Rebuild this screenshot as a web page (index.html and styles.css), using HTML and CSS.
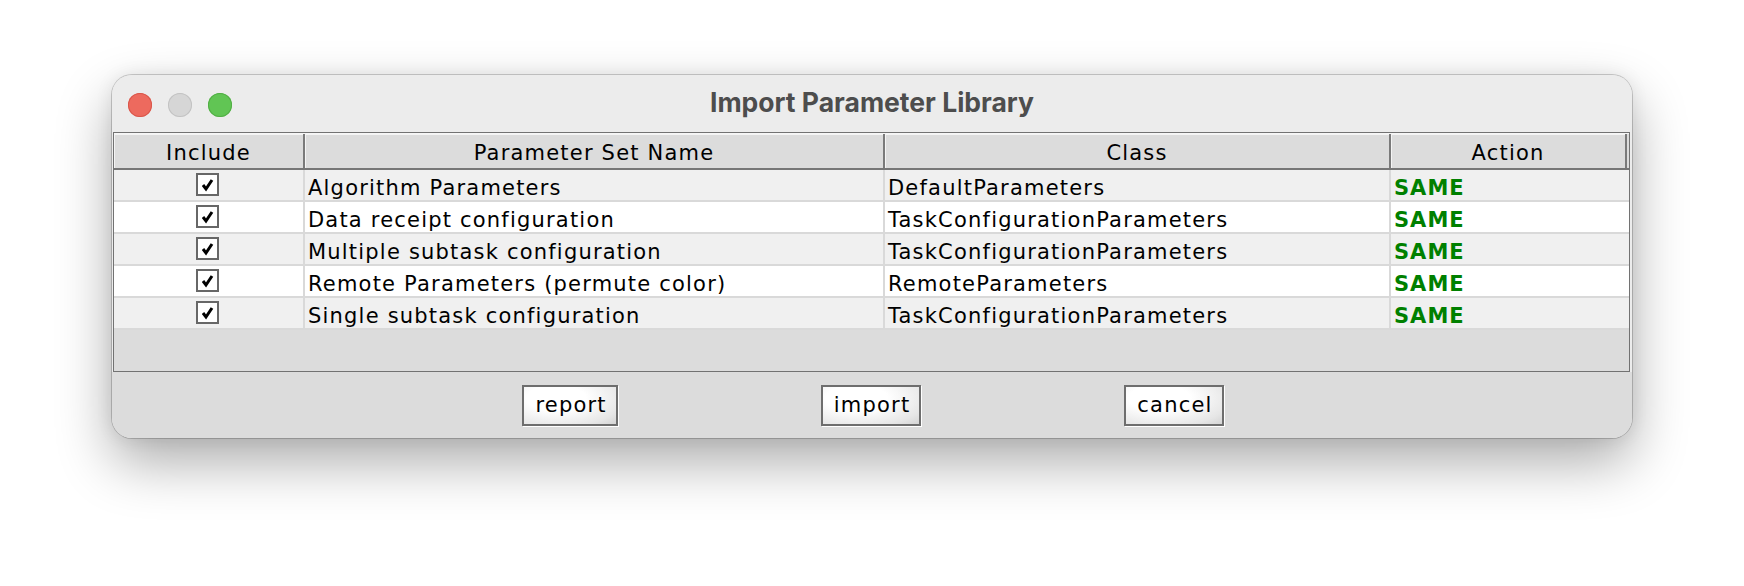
FILE: index.html
```html
<!DOCTYPE html>
<html>
<head>
<meta charset="utf-8">
<link rel="stylesheet" href="styles.css">
</head>
<body>
<div class="window">
  <div class="titlebar">
    <div class="lights">
      <span class="light red"></span>
      <span class="light gray"></span>
      <span class="light green"></span>
    </div>
    <div class="title">Import Parameter Library</div>
    <div></div>
  </div>
  <div class="scrollpane">
    <div class="thead">
      <div class="th">Include</div>
      <div class="th">Parameter Set Name</div>
      <div class="th">Class</div>
      <div class="th last">Action</div>
    </div>
    <div class="tbody">
      <div class="tr odd">
        <div class="td center"><svg class="cb" width="24" height="24" viewBox="0 0 24 24"><rect x="1" y="1" width="21" height="21" fill="#fff" stroke="#676767" stroke-width="2"/><path d="M7 12 L10 16 L16 7" fill="none" stroke="#000" stroke-width="3" stroke-linecap="butt" stroke-linejoin="miter"/></svg></div>
        <div class="td">Algorithm Parameters</div>
        <div class="td">DefaultParameters</div>
        <div class="td action">SAME</div>
      </div>
      <div class="tr">
        <div class="td center"><svg class="cb" width="24" height="24" viewBox="0 0 24 24"><rect x="1" y="1" width="21" height="21" fill="#fff" stroke="#676767" stroke-width="2"/><path d="M7 12 L10 16 L16 7" fill="none" stroke="#000" stroke-width="3" stroke-linecap="butt" stroke-linejoin="miter"/></svg></div>
        <div class="td">Data receipt configuration</div>
        <div class="td">TaskConfigurationParameters</div>
        <div class="td action">SAME</div>
      </div>
      <div class="tr odd">
        <div class="td center"><svg class="cb" width="24" height="24" viewBox="0 0 24 24"><rect x="1" y="1" width="21" height="21" fill="#fff" stroke="#676767" stroke-width="2"/><path d="M7 12 L10 16 L16 7" fill="none" stroke="#000" stroke-width="3" stroke-linecap="butt" stroke-linejoin="miter"/></svg></div>
        <div class="td">Multiple subtask configuration</div>
        <div class="td">TaskConfigurationParameters</div>
        <div class="td action">SAME</div>
      </div>
      <div class="tr">
        <div class="td center"><svg class="cb" width="24" height="24" viewBox="0 0 24 24"><rect x="1" y="1" width="21" height="21" fill="#fff" stroke="#676767" stroke-width="2"/><path d="M7 12 L10 16 L16 7" fill="none" stroke="#000" stroke-width="3" stroke-linecap="butt" stroke-linejoin="miter"/></svg></div>
        <div class="td">Remote Parameters (permute color)</div>
        <div class="td">RemoteParameters</div>
        <div class="td action">SAME</div>
      </div>
      <div class="tr odd">
        <div class="td center"><svg class="cb" width="24" height="24" viewBox="0 0 24 24"><rect x="1" y="1" width="21" height="21" fill="#fff" stroke="#676767" stroke-width="2"/><path d="M7 12 L10 16 L16 7" fill="none" stroke="#000" stroke-width="3" stroke-linecap="butt" stroke-linejoin="miter"/></svg></div>
        <div class="td">Single subtask configuration</div>
        <div class="td">TaskConfigurationParameters</div>
        <div class="td action">SAME</div>
      </div>
    </div>
  </div>
  <div class="buttons">
    <button class="btn">report</button>
    <button class="btn">import</button>
    <button class="btn">cancel</button>
  </div>
</div>
</body>
</html>
```

FILE: styles.css
```css
* { box-sizing: border-box; }
html, body { margin: 0; padding: 0; }
body {
  background: #ffffff;
  padding: 75px 0 0 112px;
  width: 1744px;
  height: 586px;
  overflow: hidden;
}
.window {
  width: 1520px;
  height: 363px;
  border-radius: 20px;
  overflow: hidden;
  background: #ececec;
  box-shadow: 0 0 0 1px rgba(0,0,0,0.18), 0 24px 55px rgba(0,0,0,0.33), 0 0 18px rgba(0,0,0,0.08);
  display: flex;
  flex-direction: column;
  font-family: "DejaVu Sans", sans-serif;
  font-size: 21px;
  color: #000;
}
.titlebar {
  height: 57px;
  flex: none;
  display: grid;
  grid-template-columns: 1fr auto 1fr;
  align-items: center;
  background: #ececec;
}
.lights {
  display: flex;
  gap: 16px;
  padding-left: 16px;
  padding-top: 2px;
}
.light {
  width: 24px;
  height: 24px;
  border-radius: 50%;
  display: block;
}
.light.red { background: #ed6a5e; box-shadow: inset 0 0 0 1px #d9574b; }
.light.gray { background: #d6d6d6; box-shadow: inset 0 0 0 1px #c3c3c3; }
.light.green { background: #61c554; box-shadow: inset 0 0 0 1px #52ae45; }
.title {
  font-family: Inter, "Liberation Sans", sans-serif;
  font-weight: 700;
  font-size: 26.5px;
  color: #4d4d4d;
  padding-bottom: 3px;
}
.scrollpane {
  margin: 0 2px 0 1px;
  height: 240px;
  flex: none;
  border: 1px solid #727272;
  background: #dcdcdc;
  box-shadow: 0 1px 0 #ffffff;
  letter-spacing: 1.2px;
}
.thead {
  display: grid;
  grid-template-columns: 191px 580px 506px 1fr;
  height: 37px;
  border-top: 1px solid #f6f6f6;
  border-bottom: 2px solid #767676;
  background: #dcdcdc;
}
.th {
  border-right: 2px solid #7a7a7a;
  box-shadow: inset 1px 0 0 #f4f4f4, inset 0 1px 0 #f4f4f4;
  text-align: center;
  line-height: 24px;
  padding-top: 7px;
}
.th.last { border-right: 2px solid #7a7a7a; margin-right: 2px; }
.tr {
  display: grid;
  grid-template-columns: 191px 580px 506px 1fr;
  height: 32px;
  background: #ffffff;
  border-bottom: 2px solid #d9d9d9;
}
.tr.odd { background: #f0f0f0; }
.td {
  border-right: 2px solid #d9d9d9;
  padding: 6px 0 0 3px;
  line-height: 24px;
  white-space: nowrap;
  overflow: hidden;
}
.td:last-child { border-right: none; }
.td.center {
  display: flex;
  justify-content: center;
  align-items: center;
  padding: 0 2px 0 0;
}
.cb { display: block; }
.td.action {
  color: #008000;
  font-weight: 700;
  padding-left: 3px;
  letter-spacing: 1px;
}
.buttons {
  flex: 1;
  background: #dcdcdc;
  display: flex;
  justify-content: center;
  align-items: flex-start;
  gap: 203px;
  padding-top: 13px;
  padding-left: 2px;
}
.btn {
  font-family: "DejaVu Sans", sans-serif;
  font-size: 21px;
  letter-spacing: 1.2px;
  color: #000;
  height: 41px;
  padding: 0 9px 0 11px;
  border: 2px solid #6e6e6e;
  border-radius: 0;
  background: radial-gradient(ellipse at 35% 30%, #ffffff 35%, #e6e6e6 80%, #d4d4d4 100%);
  box-shadow: 1px 1px 0 #ffffff;
  line-height: 37px;
}
```
